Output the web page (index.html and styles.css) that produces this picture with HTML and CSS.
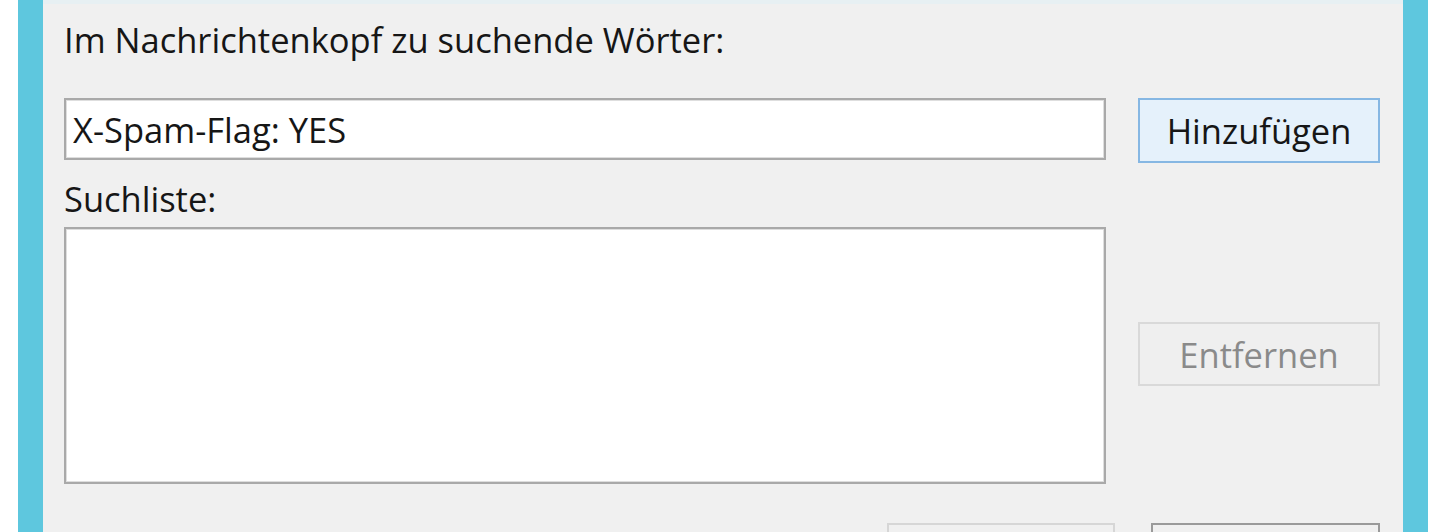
FILE: index.html
```html
<!DOCTYPE html>
<html lang="de">
<head>
    <meta charset="UTF-8">
    <meta name="viewport" content="width=device-width, initial-scale=1.0">
    <title>Nachrichtenkopf</title>
    <link rel="stylesheet" href="styles.css">
</head>
<body>
    <div class="frame">
        <div class="dialog">
            <label class="caption" for="word">Im Nachrichtenkopf zu suchende Wörter:</label>

            <div class="row top">
                <input class="field" id="word" type="text" value="X-Spam-Flag: YES">
                <button class="btn btn-hot">Hinzufügen</button>
            </div>

            <div class="caption caption-list">Suchliste:</div>

            <div class="row list-row">
                <div class="listbox"></div>
                <button class="btn btn-off" disabled>Entfernen</button>
            </div>

            <div class="row actions">
                <button class="btn btn-wide"></button>
                <button class="btn btn-wide btn-default"></button>
            </div>
        </div>
    </div>
</body>
</html>
```

FILE: styles.css
```css
* {
    margin: 0;
    padding: 0;
    box-sizing: border-box;
}

html, body {
    height: 532px;
    overflow: hidden;
}

body {
    background-color: #ffffff;
    font-family: "Open Sans", "Noto Sans", Arial, sans-serif;
    font-size: 34.5px;
    color: #161616;
}

.frame {
    margin-left: 18px;
    width: 1410px;
    height: 532px;
    overflow: hidden;
    border-left: 25px solid #5ec7de;
    border-right: 25px solid #5ec7de;
    background-color: #f0f0f0;
}

.dialog {
    display: flex;
    flex-direction: column;
    border-top: 4px solid #e7f0f3;
    padding: 16px 23px 0 21px;
}

.caption {
    display: block;
    line-height: 40px;
    height: 40px;
}

.caption-list {
    margin-top: 16px;
}

.row {
    display: flex;
    gap: 32px;
}

.top {
    margin-top: 38px;
    align-items: flex-start;
}

.field {
    width: 1042px;
    height: 62px;
    border: 2px solid #a9a9a9;
    box-shadow: inset 0 0 0 1px #dedede;
    background-color: #ffffff;
    padding: 0 7px;
    font-family: inherit;
    font-size: 34.5px;
    color: #161616;
    outline: none;
}

.btn {
    flex-shrink: 0;
    width: 242px;
    height: 65px;
    font-family: inherit;
    font-size: 34.5px;
    color: #161616;
    background-color: #e1e1e1;
    border: 2px solid #adadad;
}

.btn-hot {
    background-color: #e5f1fb;
    border-color: #86b7e3;
}

.list-row {
    margin-top: 8px;
    align-items: center;
}

.listbox {
    width: 1042px;
    height: 257px;
    border: 2px solid #a9a9a9;
    box-shadow: inset 0 0 0 1px #dedede;
    background-color: #ffffff;
}

.btn-off {
    height: 64px;
    margin-top: -3px;
    background-color: #efefef;
    border-color: #d9d9d9;
    color: #8a8a8a;
}

.actions {
    margin-top: 39px;
    justify-content: flex-end;
    gap: 36px;
}

.btn-wide {
    width: 228px;
    height: 64px;
    background-color: #f0f0f0;
    border-color: #d6d6d6;
}

.btn-default {
    width: 229px;
    border-color: #9a9a9a;
}
```
